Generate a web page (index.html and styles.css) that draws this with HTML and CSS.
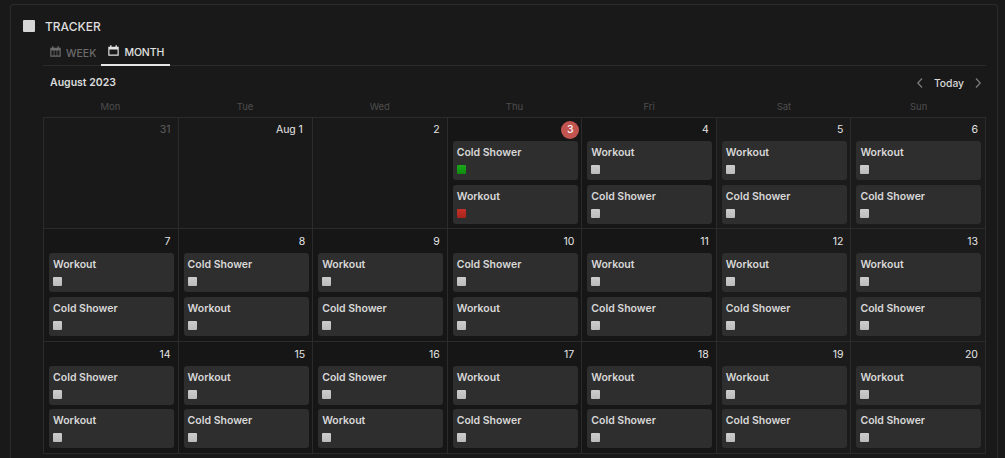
FILE: index.html
```html
<!DOCTYPE html>
<html lang="en">
<head>
<meta charset="utf-8">
<title>Tracker</title>
<link rel="stylesheet" href="styles.css">
</head>
<body>
<main class="panel">
  <header class="title-row"><span class="title-box"></span><h1 class="title">TRACKER</h1></header>
  <div class="content">
    <nav class="tabs">
      <a class="tab tab-week"><svg class="tab-icon" viewBox="0 0 12 12"><path fill="currentColor" d="M.3 1.800h2V.2h1.500v1.600h4.400V.2h1.500v1.600h2v10H.3zM1.600 5v5.300h2.400V5zm3.200 0v5.300h2.400V5zm3.200 0v5.300h2.400V5z"/></svg>WEEK</a>
      <a class="tab tab-active"><svg class="tab-icon" viewBox="0 0 12 12"><path fill="currentColor" d="M.3 1.800h2V.2h1.500v1.600h4.400V.2h1.500v1.600h2v10H.3zM1.600 5v5.300h8.800V5z"/></svg>MONTH</a>
    </nav>
    <div class="toolbar">
      <span class="month">August 2023</span>
      <div class="nav">
        <svg class="chev" viewBox="0 0 10 12"><path d="M7 1.500 2.800 6 7 10.500"/></svg>
        <span class="today">Today</span>
        <svg class="chev" viewBox="0 0 10 12"><path d="M3 1.500 7.200 6 3 10.500"/></svg>
      </div>
    </div>
    <div class="weekdays"><span>Mon</span><span>Tue</span><span>Wed</span><span>Thu</span><span>Fri</span><span>Sat</span><span>Sun</span></div>
    <div class="grid" id="grid"></div>
  </div>
</main>
<script src="app.js"></script>
</body>
</html>
```
FILE: styles.css
```css
* { box-sizing: border-box; }
html, body { margin: 0; height: 458px; overflow: hidden; background: #191919; }
body { font-family: Inter, "Liberation Sans", sans-serif; color: #e6e6e6; padding: 4px 7px 0 10px; }
.panel { border: 1px solid #2b2b2b; border-bottom: 0; border-radius: 3px 3px 0 0; height: 454px; overflow: hidden; padding: 14px 11px 0 12px; background: #191919; }
.title-row { display: flex; align-items: center; gap: 10px; height: 14px; }
.title-box { width: 12px; height: 12px; background: #d6d6d6; border-radius: 1px; }
.title { margin: 0; font-size: 12px; font-weight: 500; color: #dedede; }
.content { margin-left: 20px; }
.tabs { display: flex; height: 28px; margin-top: 5px; border-bottom: 1px solid #2b2b2b; }
.tab { display: flex; align-items: center; gap: 5px; height: 28px; padding: 3px 6px 1px 7px; font-size: 10.500px; font-weight: 500; color: #6b6b6b; }
.tab-week { padding-right: 5px; }
.tab-active { color: #e2e2e2; border-bottom: 2px solid #e6e6e6; letter-spacing: -0.1px; }
.tab-icon { width: 11px; height: 11px; margin-top: -3px; }
.toolbar { display: flex; justify-content: space-between; align-items: center; height: 31px; padding: 2px 3px 0 7px; }
.month { font-size: 10.500px; font-weight: 600; color: #dcdcdc; }
.nav { display: flex; align-items: center; gap: 9px; }
.today { font-size: 10.300px; color: #d8d8d8; font-weight: 500; }
.chev { width: 10px; height: 12px; fill: none; stroke: #7d7d7d; stroke-width: 1.200; }
.weekdays { display: grid; grid-template-columns: repeat(7, 1fr); height: 20px; padding-bottom: 2px; align-items: center; text-align: center; font-size: 9.500px; color: #4e4e4e; }
.grid { display: grid; grid-template-columns: repeat(7, 1fr); grid-template-rows: 111px 113px 112px; border-top: 1px solid #2b2b2b; border-left: 1px solid #2b2b2b; }
.cell { padding: 3px 3.500px 0 5px; border-right: 1px solid #2b2b2b; border-bottom: 1px solid #2b2b2b; background: #161616; }
.cell-first { background: #191919; }
.cell-weekend { background: #1b1b1b; }
.cell:nth-child(n+8) { padding-top: 4px; }
.date { display: flex; justify-content: flex-end; align-items: center; height: 17px; margin-bottom: 3px; padding-right: 3.500px; font-size: 10.500px; font-weight: 400; color: #e4e4e4; }
.date-muted { color: #5f5f5f; }
.date-long { padding-right: 6px; letter-spacing: -0.1px; }
.date-today { width: 18px; height: 18px; flex: none; margin-right: -5px; display: flex; align-items: center; justify-content: center; border-radius: 50%; background: #c25450; color: #f2f2f2; font-weight: 500; }
.event { height: 39px; margin-bottom: 5px; padding: 5px 4px 0; background: #2e2e2e; border-radius: 3px; font-size: 10.500px; font-weight: 600; color: #d8d8d8; line-height: 13px; }
.cell:nth-child(n+15) .event { margin-bottom: 4px; }
.check { display: block; width: 9px; height: 9px; margin-top: 6px; border-radius: 1px; background: linear-gradient(#cccccc, #bcbcbc); }
.check-green { background: linear-gradient(#1aa81a, #0f8a0f); }
.check-red { background: linear-gradient(#c4312a, #a6231c); }
```
FILE: app.js
```js
const W = 'Workout', C = 'Cold Shower';
const days = [
  ['31', 0], ['Aug 1', 0], ['2', 0],
  ['3', [C, W]], ['4', [W, C]], ['5', [W, C]], ['6', [W, C]],
  ['7', [W, C]], ['8', [C, W]], ['9', [W, C]], ['10', [C, W]], ['11', [W, C]], ['12', [W, C]], ['13', [W, C]],
  ['14', [C, W]], ['15', [W, C]], ['16', [C, W]], ['17', [W, C]], ['18', [W, C]], ['19', [W, C]], ['20', [W, C]]
];
const grid = document.getElementById('grid');
days.forEach(([label, events], i) => {
  const cell = document.createElement('div');
  cell.className = 'cell' + (i % 7 > 4 ? ' cell-weekend' : '') + (i < 3 ? ' cell-first' : '');
  const date = document.createElement('div');
  date.className = 'date' + (label === '31' ? ' date-muted' : '') + (label === 'Aug 1' ? ' date-long' : '');
  if (label === '3') {
    const t = document.createElement('span');
    t.className = 'date-today';
    t.textContent = label;
    date.appendChild(t);
  } else {
    date.textContent = label;
  }
  cell.appendChild(date);
  (events || []).forEach((name, j) => {
    const ev = document.createElement('div');
    ev.className = 'event';
    ev.textContent = name;
    const box = document.createElement('span');
    box.className = 'check' + (label === '3' ? (j === 0 ? ' check-green' : ' check-red') : '');
    ev.appendChild(box);
    cell.appendChild(ev);
  });
  grid.appendChild(cell);
});
```
